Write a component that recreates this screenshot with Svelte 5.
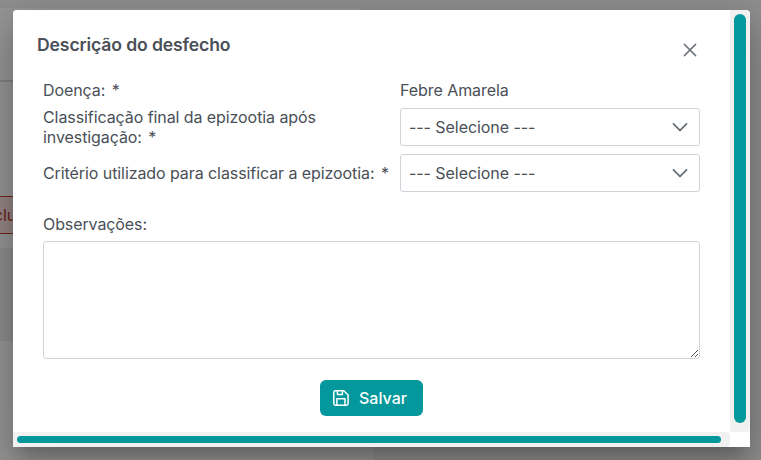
<script>
  const placeholder = '--- Selecione ---';
</script>

{#snippet dropdown()}
  <div class="select" role="combobox" aria-expanded="false" aria-controls="options" tabindex="0">
    <span>{placeholder}</span>
    <svg width="16" height="16" viewBox="0 0 16 16"><path d="M1.5 4.8 L8 11.3 L14.5 4.8" fill="none" stroke="#6c757d" stroke-width="1.9" stroke-linecap="round" /></svg>
  </div>
{/snippet}

<div class="screen">
  <div class="page" aria-hidden="true">
    <div class="topbar"></div>
    <div class="columns">
      <div class="header"></div>
      <div class="panel"><div class="delete">Excluir</div></div>
      <div class="gap"></div>
      <div class="lower"></div>
    </div>
  </div>
  <div class="mask"></div>
  <div class="dialog" role="dialog" aria-label="Descrição do desfecho">
    <div class="body">
      <header>
        <h1>Descrição do desfecho</h1>
        <button class="close" aria-label="Fechar">
          <svg width="14" height="14" viewBox="0 0 14 14"><path d="M1.4 1.4 L12.6 12.6 M12.6 1.4 L1.4 12.6" fill="none" stroke="#6c757d" stroke-width="1.5" stroke-linecap="round" /></svg>
        </button>
      </header>
      <div class="form">
        <div class="row first"><span class="label">Doença: <i>*</i></span><span class="value">Febre Amarela</span></div>
        <div class="row second"><span class="label">Classificação final da epizootia após<br />investigação: <i>*</i></span>{@render dropdown()}</div>
        <div class="row third"><span class="label">Critério utilizado para classificar a epizootia: <i>*</i></span>{@render dropdown()}</div>
        <label for="obs">Observações:</label>
        <div class="area">
          <textarea id="obs"></textarea>
          <svg class="grip" width="9" height="9" viewBox="0 0 9 9"><path d="M1 8 L8 1 M5 8 L8 5" stroke="#555" stroke-width="1" fill="none" /></svg>
        </div>
        <button class="save">
          <svg width="16" height="16" viewBox="0 0 16 16" fill="none" stroke="#fff" stroke-width="1.5" stroke-linejoin="round"><path d="M2.4 .8 H10.8 L15.1 5 V13.6 Q15.1 15.2 13.5 15.2 H2.4 Q.8 15.2 .8 13.6 V2.4 Q.8 .8 2.4 .8 Z M3.9 15 V8.8 H12 V15 M4.4 1 V4.6 H9.4 V1" /></svg>
          <span>Salvar</span>
        </button>
      </div>
    </div>
    <div class="track vertical"><div class="thumb"></div></div>
    <div class="track horizontal"><div class="thumb"></div></div>
  </div>
</div>

<style>
  :global(body) { background: #999; overflow: hidden; }
  .screen { position: relative; width: 761px; height: 460px; overflow: hidden; font: 16px/20px Inter, "Liberation Sans", sans-serif; color: #495057; }
  .page { height: 460px; background: #efefef; }
  .topbar { height: 8px; background: #efefef; }
  .columns { width: 374px; height: 452px; }
  .header { box-sizing: border-box; width: 360px; height: 74px; background: #fafafa; border-bottom: 2px solid #d8d8d8; }
  .panel { box-sizing: border-box; width: 360px; height: 166px; padding-top: 114px; background: #fafafa; }
  .delete { box-sizing: border-box; width: 55px; height: 38px; margin-left: -34px; padding: 8px 0 0 9px; border: 1px solid #c2402f; background: #f8e0dd; color: #b53a2c; letter-spacing: -.08px; }
  .gap { height: 93px; background: #ebebeb; }
  .lower { height: 119px; background: #fafafa; }
  .mask { position: absolute; inset: 0; background: rgba(0, 0, 0, .4); }
  .dialog { position: absolute; left: 13px; top: 10px; display: grid; grid-template: 422px 15px / 717px 20px; width: 737px; height: 437px; overflow: hidden; background: #fff; border-radius: 4px 4px 0 0; }
  .dialog { box-shadow: 0 11px 15px -7px rgba(0, 0, 0, .2), 0 24px 38px 3px rgba(0, 0, 0, .14), 0 9px 46px 8px rgba(0, 0, 0, .12); }
  .body { background: #fff; }
  header { display: flex; align-items: flex-start; height: 70px; padding: 24px 24px 0; box-sizing: border-box; }
  h1 { flex: 1; margin: 0; font-size: 17.6px; line-height: 22px; font-weight: 600; letter-spacing: -.13px; }
  button { padding: 0; border: 0; font: inherit; }
  .close { display: flex; width: 32px; height: 32px; align-items: center; justify-content: center; background: none; }
  .form { padding: 0 30px; }
  .row { display: grid; grid-template-columns: 357px 300px; }
  .first { height: 27px; }
  .second { height: 46px; }
  .third { height: 60px; align-items: start; }
  .second .label { margin-top: -1px; }
  .third .label { margin-top: 9px; }
  .second, .third { padding-top: 1px; box-sizing: border-box; }
  .label { white-space: nowrap; letter-spacing: -.08px; }
  .value { letter-spacing: -.06px; }
  i { margin-left: 2px; font-style: normal; }
  .select { box-sizing: border-box; display: flex; align-items: center; justify-content: space-between; width: 300px; height: 38px; padding: 0 11px 0 8px; border: 1px solid #ced4da; border-radius: 3px; letter-spacing: -.06px; }
  label { display: block; height: 28px; margin-top: 1px; line-height: 20px; letter-spacing: -.1px; }
  .area { position: relative; height: 118px; margin-top: -1px; }
  textarea { display: block; box-sizing: border-box; width: 657px; height: 118px; margin: 0; border: 1px solid #ced4da; border-radius: 3px; background: #fff; resize: none; }
  .grip { position: absolute; right: 1px; bottom: 1px; }
  .save { display: flex; align-items: center; width: 103px; height: 36px; margin: 21px 0 0 277px; padding-left: 13px; gap: 10px; border-radius: 6px; background: #04979c; color: #fff; font-weight: 500; }
  .track { box-sizing: border-box; padding: 4px; background: #f1f1f1; }
  .vertical { border-radius: 0 4px 4px 0; }
  .vertical .thumb { width: 12px; height: 409px; border-radius: 6px; background: #04979c; }
  .horizontal { border-radius: 0 4px 4px 0; }
  .horizontal .thumb { width: 704px; height: 7px; border-radius: 4px; background: #04979c; }
</style>
